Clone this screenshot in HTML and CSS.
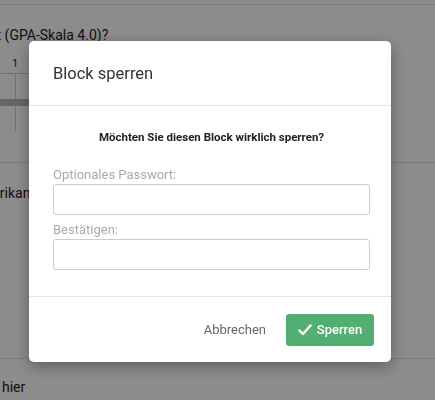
FILE: index.html
```html
<!DOCTYPE html>
<html>
<head>
    <title>Block sperren</title>
    <link rel="stylesheet" href="styles.css">
</head>
<body>
    <div class="page">
        <div class="top-rule"></div>
        <div class="question-title">Durchschnitt (GPA-Skala 4.0)?</div>
        <div class="matrix">
            <div class="matrix-head"><span>1</span></div>
            <div class="matrix-row"><div class="cell"></div></div>
            <div class="matrix-band"></div>
            <div class="matrix-row"><div class="cell"></div></div>
        </div>
        <div class="block-rule"></div>
        <div class="choice">Amerikaner</div>
        <div class="block-rule lower"></div>
        <div class="choice">hier</div>
    </div>

    <div class="overlay">
        <div class="modal">
            <div class="modal-header">Block sperren</div>
            <div class="modal-body">
                <p class="prompt">Möchten Sie diesen Block wirklich sperren?</p>
                <label class="field-label">Optionales Passwort:</label>
                <input class="field" type="password">
                <label class="field-label">Bestätigen:</label>
                <input class="field" type="password">
            </div>
            <div class="modal-footer">
                <button class="btn-link">Abbrechen</button>
                <button class="btn-confirm">
                    <svg width="14" height="12" viewBox="0 0 14 12">
                        <path d="M1.5 6.5 L5 10 L12.5 1.5" fill="none" stroke="#fff" stroke-width="2.4" stroke-linecap="round" stroke-linejoin="round"/>
                    </svg>
                    Sperren
                </button>
            </div>
        </div>
    </div>
</body>
</html>
```

FILE: styles.css
```css
body {
    margin: 0;
    font-family: Roboto, "Liberation Sans", sans-serif;
    color: #222;
    background: #fff;
    overflow: hidden;
}
.page {
    height: 400px;
}
.top-rule {
    height: 4px;
    border-bottom: 1px solid #ddd;
}
.question-title {
    font-size: 14px;
    margin: 22px 0 0 -78px;
    white-space: nowrap;
}
.matrix {
    margin-top: 10px;
    width: 120px;
}
.matrix-head {
    height: 20px;
    border-bottom: 1px solid #ccc;
    font-size: 11px;
    color: #222;
}
.matrix-head span {
    display: inline-block;
    margin-left: 12px;
    margin-top: 4px;
}
.matrix-row {
    height: 25px;
}
.matrix-row + .matrix-row {
    height: 26px;
    border-bottom: 1px solid #ccc;
}
.cell {
    width: 15px;
    height: 100%;
    border-right: 1px solid #ccc;
}
.matrix-band {
    height: 7px;
    background: #bbb;
}
.block-rule {
    margin-top: 31px;
    border-top: 1px solid #ddd;
}
.block-rule.lower {
    margin-top: 157px;
}
.choice {
    font-size: 14px;
    margin: 22px 0 0 -29px;
    white-space: nowrap;
}
.block-rule.lower + .choice {
    margin: 20px 0 0 2px;
}

.overlay {
    position: fixed;
    inset: 0;
    background: rgba(0, 0, 0, 0.45);
    padding: 41px 0 0 29px;
}
.modal {
    width: 362px;
    background: #fff;
    border-radius: 5px;
    box-shadow: 0 4px 16px rgba(0, 0, 0, 0.35);
}
.modal-header {
    height: 65px;
    box-sizing: border-box;
    padding: 0 24px;
    display: flex;
    align-items: center;
    font-size: 16.5px;
    color: #333;
    border-bottom: 1px solid #e6e6e6;
}
.modal-body {
    padding: 24px 21px 26px 24px;
    display: flex;
    flex-direction: column;
    border-bottom: 1px solid #e6e6e6;
}
.prompt {
    margin: 0 0 23px;
    line-height: 14px;
    text-align: center;
    font-size: 11.5px;
    font-weight: bold;
    color: #222;
}
.field-label {
    font-size: 13px;
    line-height: 15px;
    color: #aaa;
    margin-bottom: 2px;
}
.field {
    height: 31px;
    box-sizing: border-box;
    border: 1px solid #ccc;
    border-radius: 3px;
    margin-bottom: 7px;
}
.field:last-child {
    margin-bottom: 0;
}
.modal-footer {
    height: 65px;
    box-sizing: border-box;
    padding-right: 17px;
    display: flex;
    align-items: center;
    justify-content: flex-end;
    gap: 20px;
}
.btn-link {
    border: 0;
    background: none;
    font: inherit;
    font-size: 13px;
    color: #666;
    padding: 0;
}
.btn-confirm {
    width: 88px;
    height: 32px;
    border: 0;
    border-radius: 3px;
    background: #53ae72;
    color: #fff;
    font: inherit;
    font-size: 13px;
    font-weight: 500;
    display: flex;
    align-items: center;
    justify-content: center;
    gap: 5px;
}
```
